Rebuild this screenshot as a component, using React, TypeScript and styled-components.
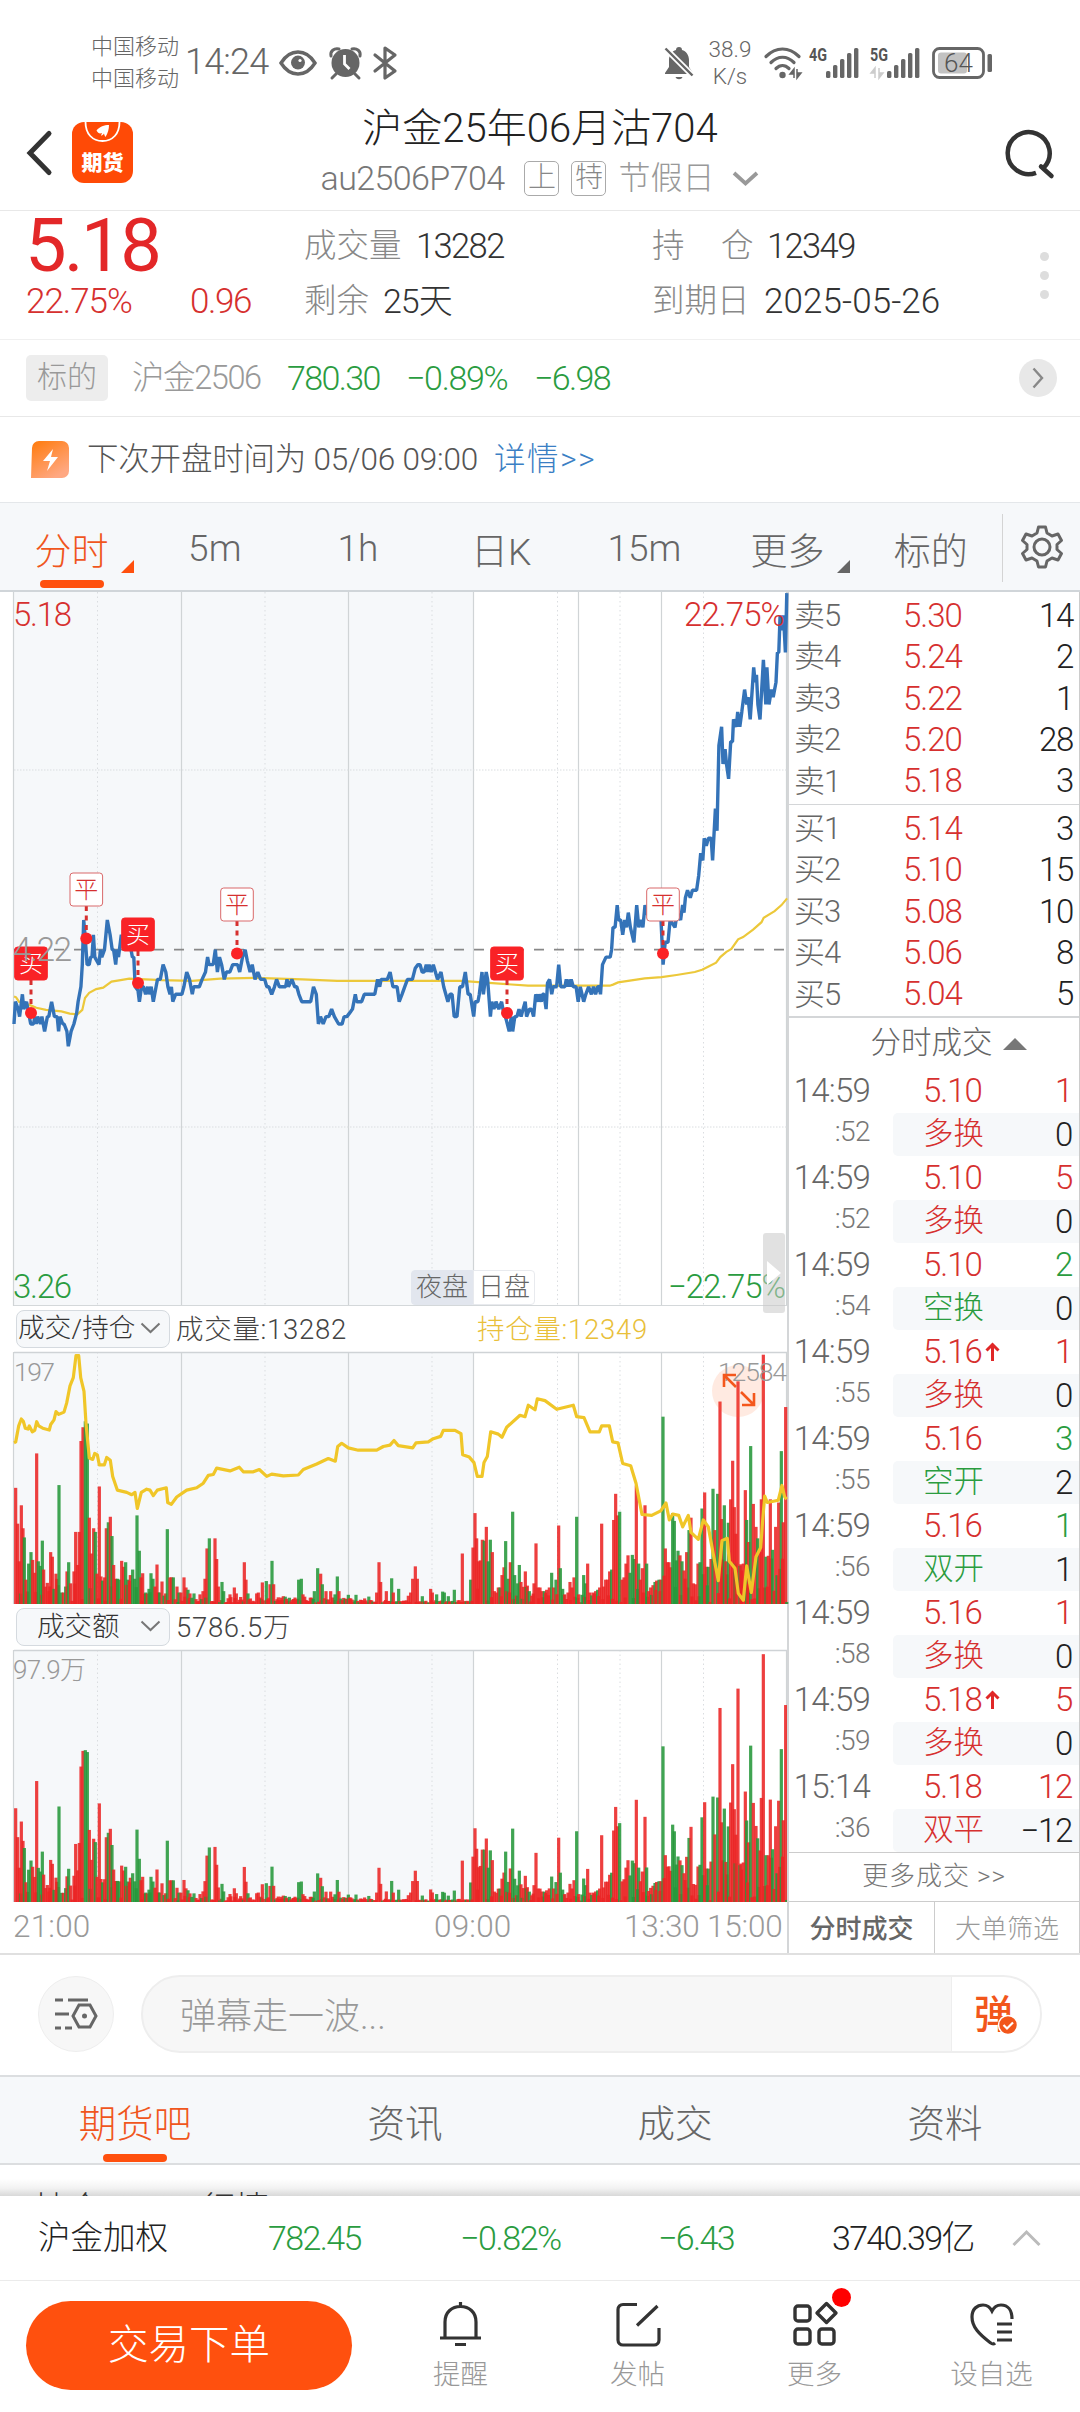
import React from 'react';
import styled, { createGlobalStyle, css } from 'styled-components';

const RED = '#d6302f';
const GREEN = '#2a9c3f';
const ORANGE = '#ff500e';
const PANEL = '#f6f8fa';
const FONT = "Roboto, 'Noto Sans CJK SC', sans-serif";

const Global = createGlobalStyle`
  html, body { margin: 0; padding: 0; background: #fff; }
  body { font-family: ${FONT}; font-weight: 300; color: #333; }
  * { box-sizing: border-box; }
  svg { display: block; flex: none; overflow: visible; }
`;

const Page = styled.div`
  width: 1080px;
  height: 2412px;
  display: flex;
  flex-direction: column;
  overflow: hidden;
  background: #fff;
`;

type TextProps = { $size?: number; $color?: string; $track?: number; $left?: number; $width?: number; $weight?: number };
const Text = styled.span<TextProps>`
  flex: none;
  white-space: pre;
  line-height: 1.2;
  font-size: ${(p) => p.$size ?? 32}px;
  color: ${(p) => p.$color ?? '#333'};
  letter-spacing: ${(p) => p.$track ?? 0}px;
  margin-left: ${(p) => p.$left ?? 0}px;
  font-weight: ${(p) => p.$weight ?? 300};
  ${(p) => p.$width && css`width: ${p.$width}px;`}
`;

/* ---------- status bar ---------- */
const StatusBar = styled.div`
  height: 105px;
  flex: none;
  display: flex;
  align-items: center;
  padding: 21px 87px 0 91px;
  color: #666;
`;
const Stack = styled.div<{ $gap: number; $left?: number; $width: number }>`
  display: flex;
  flex-direction: column;
  align-items: center;
  gap: ${(p) => p.$gap}px;
  width: ${(p) => p.$width}px;
  margin-left: ${(p) => p.$left ?? 0}px;
`;
const Spacer = styled.div`
  flex: 1;
`;
const Gap = styled.div<{ $w: number }>`
  width: ${(p) => p.$w}px;
  flex: none;
`;

const Signal = ({ label, data }: { label: string; data?: boolean }) => (
  <svg width="50" height="32" viewBox="0 0 50 32">
    <text x="0" y="14" fontSize="18.5" fontWeight="700" fill="#555" fontFamily="Roboto, sans-serif" textLength="18" lengthAdjust="spacingAndGlyphs">{label}</text>
    {data && <path d="M5 31V21l-4 5h4M9 21v10l4-5H9" fill="#ccc" stroke="#ccc" strokeWidth="1.5" />}
    {[7, 13, 19, 25, 30].map((h, i) => (
      <rect key={i} x={17 + i * 7} y={31 - h} width="4.4" height={h} rx="1.6" fill="#666" />
    ))}
  </svg>
);

/* ---------- title bar ---------- */
const TitleBar = styled.div`
  height: 106px;
  flex: none;
  display: flex;
  align-items: flex-start;
  padding: 0 26px;
  border-bottom: 1px solid #e8e8e8;
`;
const BackSlot = styled.div`
  padding-top: 26px;
`;
const AppSlot = styled.div`
  padding: 17px 0 0 20px;
`;
const TitleBlock = styled.div`
  flex: 1;
  display: flex;
  flex-direction: column;
  align-items: center;
  padding-right: 58px;
`;
const SubTitle = styled.div`
  display: flex;
  align-items: center;
  height: 42px;
  margin-top: 4px;
`;
const Tag = styled.span<{ $left: number }>`
  width: 35px;
  height: 35px;
  margin-left: ${(p) => p.$left}px;
  border: 1.5px solid #aaa;
  border-radius: 5px;
  font-size: 28px;
  line-height: 31px;
  text-align: center;
  color: #888;
`;
const SearchSlot = styled.div`
  padding-top: 25px;
`;

/* ---------- quote ---------- */
const Quote = styled.div`
  height: 129px;
  flex: none;
  display: grid;
  grid-template-columns: 279px 348px 382px 1fr;
  padding-left: 25px;
  border-bottom: 1px solid #f0f0f0;
`;
const QuoteColumn = styled.div`
  display: flex;
  flex-direction: column;
  padding-top: 8px;
`;
const QuoteRow = styled.div`
  display: flex;
  align-items: center;
  height: 55px;
`;
const PriceColumn = styled.div`
  display: flex;
  flex-direction: column;
`;
const PriceRow = styled.div<{ $h: number; $pad?: number }>`
  height: ${(p) => p.$h}px;
  display: flex;
  align-items: center;
  padding-left: ${(p) => p.$pad ?? 0}px;
`;
const Dots = styled.div`
  display: flex;
  flex-direction: column;
  gap: 10px;
  padding: 41px 0 0 6px;
`;
const Dot = styled.i`
  width: 9px;
  height: 9px;
  border-radius: 50%;
  background: #ddd;
`;

/* ---------- underlying and notice ---------- */
const InfoRow = styled.div<{ $h: number; $pad: number; $border: string }>`
  height: ${(p) => p.$h}px;
  flex: none;
  display: flex;
  align-items: center;
  padding: 0 23px 0 ${(p) => p.$pad}px;
  border-bottom: 1px solid ${(p) => p.$border};
`;
const GreyTag = styled.span`
  width: 82px;
  height: 46px;
  border-radius: 5px;
  background: #ededed;
  color: #999;
  font-size: 30px;
  line-height: 44px;
  text-align: center;
`;
const RoundButton = styled.span`
  width: 38px;
  height: 38px;
  border-radius: 50%;
  background: #e8e8e8;
  display: flex;
  align-items: center;
  justify-content: center;
`;

/* ---------- period tabs ---------- */
const PeriodBar = styled.div`
  height: 89px;
  flex: none;
  display: flex;
  background: ${PANEL};
  border-bottom: 2px solid #d0d5d9;
`;
const Period = styled.div<{ $active?: boolean; $corner?: boolean }>`
  width: 143.2px;
  position: relative;
  display: flex;
  align-items: center;
  justify-content: center;
  padding-top: 4px;
  font-size: 37px;
  color: ${(p) => (p.$active ? '#f0561d' : '#666')};
  ${(p) => p.$active && css`
    &::before {
      content: '';
      position: absolute;
      left: 40px;
      bottom: 2px;
      width: 64px;
      height: 8px;
      border-radius: 4px;
      background: ${ORANGE};
    }
  `}
  ${(p) => p.$corner && css`
    &::after {
      content: '';
      position: absolute;
      right: 9px;
      bottom: 17px;
      border-left: 13px solid transparent;
      border-bottom: 13px solid ${p.$active ? ORANGE : '#666'};
    }
  `}
`;
const GearSlot = styled.div`
  flex: 1;
  margin: 11px 0 8px;
  border-left: 1px solid #d4d4d4;
  display: flex;
  align-items: center;
  justify-content: center;
  padding-bottom: 3px;
`;

/* ---------- main panel ---------- */
const Main = styled.div`
  height: 1363px;
  flex: none;
  display: flex;
  border-bottom: 2px solid #e0e0e0;
`;
const Charts = styled.div`
  width: 787px;
  display: flex;
  flex-direction: column;
`;
const ChartBox = styled.div`
  position: relative;
`;
const Legend = styled.div<{ $h: number }>`
  height: ${(p) => p.$h}px;
  display: flex;
  align-items: center;
  padding-left: 16px;
`;
const Select = styled.div<{ $indent: number }>`
  width: 154px;
  height: 38px;
  display: flex;
  align-items: center;
  justify-content: space-between;
  padding: 0 8px 2px ${(p) => p.$indent}px;
  border: 1px solid #d5dadf;
  border-radius: 8px;
  background: ${PANEL};
  flex: none;
`;
const SessionSwitch = styled.div`
  position: absolute;
  left: 411px;
  bottom: 1px;
  display: flex;
`;
const Session = styled.span<{ $night?: boolean }>`
  width: 62px;
  height: 35px;
  font-size: 26px;
  line-height: 33px;
  text-align: center;
  color: #666;
  border: 1px solid ${(p) => (p.$night ? '#e2e6ee' : '#e8eaee')};
  border-radius: ${(p) => (p.$night ? '4px 0 0 4px' : '0 4px 4px 0')};
  background: ${(p) => (p.$night ? '#e2e6ee' : '#fff')};
`;
const Handle = styled.div`
  position: absolute;
  left: 763px;
  bottom: -7px;
  width: 22px;
  height: 80px;
  border-radius: 3px;
  background: rgba(200, 200, 200, 0.55);
  display: flex;
  align-items: center;
  justify-content: center;
`;
const Expand = styled.div`
  position: absolute;
  left: 711px;
  top: 12px;
`;
const TimeAxis = styled.div`
  height: 50px;
  display: grid;
  grid-template-columns: 421px 190px 83px 1fr;
  align-items: center;
  padding-left: 13px;
`;

/* ---------- order book ---------- */
const Book = styled.div`
  width: 293px;
  border-left: 2px solid #d4d6d8;
  border-right: 1px solid #ccc;
  display: flex;
  flex-direction: column;
`;
const Levels = styled.div<{ $h: number; $border: number; $top: number }>`
  height: ${(p) => p.$h}px;
  padding-top: ${(p) => p.$top}px;
  border-bottom: ${(p) => p.$border}px solid #d4d6d8;
`;
const Level = styled.div`
  height: 41.4px;
  display: grid;
  grid-template-columns: 109px 1fr auto;
  align-items: center;
  padding: 0 6px 0 5px;
`;
const TradeTitle = styled.div`
  height: 51px;
  display: flex;
  align-items: center;
  justify-content: center;
  gap: 10px;
  padding-left: 29px;
`;
const Up = styled.i`
  border: 12px solid transparent;
  border-top: 0;
  border-bottom: 12px solid #777;
`;
const Trade = styled.div`
  height: 87px;
  display: grid;
  grid-template-rows: 44px 43px;
  grid-template-columns: 104px 1fr;
`;
const TimeCell = styled.div<{ $lift?: number }>`
  display: flex;
  align-items: center;
  justify-content: flex-end;
  padding-right: 23px;
  padding-bottom: ${(p) => p.$lift ?? 0}px;
`;
const DealCell = styled.div<{ $shade?: boolean }>`
  display: flex;
  align-items: center;
  padding: 0 7px 0 30px;
  border-radius: 5px 0 0 5px;
  background: ${(p) => (p.$shade ? PANEL : 'transparent')};
`;
const MoreRow = styled.div`
  height: 50px;
  border-top: 1px solid #ccc;
  border-bottom: 1px solid #ccc;
  display: flex;
  align-items: center;
  justify-content: center;
  padding-right: 14px;
`;
const BookTabs = styled.div`
  flex: 1;
  display: grid;
  grid-template-columns: 1fr 1fr;
`;
const BookTab = styled.div<{ $active?: boolean }>`
  display: flex;
  align-items: center;
  justify-content: center;
  padding-bottom: 2px;
  font-size: 26px;
  font-weight: ${(p) => (p.$active ? 500 : 300)};
  color: ${(p) => (p.$active ? '#666' : '#999')};
  border-left: ${(p) => (p.$active ? 0 : 1)}px solid #ccc;
`;

/* ---------- comment bar ---------- */
const CommentBar = styled.div`
  height: 122px;
  flex: none;
  display: flex;
  align-items: center;
  padding: 0 38px 2px;
  border-bottom: 2px solid #dcdee0;
`;
const RoundTool = styled.div`
  width: 76px;
  height: 76px;
  border-radius: 50%;
  background: #f7f7f7;
  border: 1px solid #eee;
  display: flex;
  align-items: center;
  justify-content: center;
`;
const InputBox = styled.div`
  width: 901px;
  height: 78px;
  margin-left: 27px;
  display: flex;
  align-items: center;
  overflow: hidden;
  border-radius: 39px;
  background: #f7f7f7;
  border: 2px solid #eee;
`;
const Placeholder = styled.span`
  padding: 5px 0 0 37px;
  font-size: 36px;
  line-height: 44px;
  color: #999;
`;
const BulletToggle = styled.div`
  width: 89px;
  height: 100%;
  margin-left: auto;
  border-left: 1px solid #eee;
  background: #fff;
  display: flex;
  align-items: center;
  padding-left: 21px;
`;

/* ---------- bottom section ---------- */
const TopicTabs = styled.div`
  height: 88px;
  flex: none;
  display: grid;
  grid-template-columns: repeat(4, 1fr);
  background: ${PANEL};
  border-bottom: 2px solid #dcdee0;
`;
const Topic = styled.div<{ $active?: boolean }>`
  position: relative;
  display: flex;
  align-items: center;
  justify-content: center;
  padding-top: 1px;
  font-size: 37.5px;
  color: ${(p) => (p.$active ? '#f0561d' : '#666')};
  ${(p) => p.$active && css`
    &::after {
      content: '';
      position: absolute;
      left: 103px;
      bottom: 1px;
      width: 64px;
      height: 8px;
      border-radius: 4px;
      background: ${ORANGE};
    }
  `}
`;
const Feed = styled.div`
  height: 31px;
  flex: none;
  overflow: hidden;
  padding: 24px 0 0 34px;
  font-size: 34px;
  line-height: 40px;
  white-space: pre;
  background: linear-gradient(#fff 45%, #f2f2f2 75%, #d8d8d8);
`;
const IndexBar = styled.div`
  height: 85px;
  flex: none;
  display: flex;
  align-items: center;
  padding-left: 38px;
  border-bottom: 1px solid #ebebeb;
`;
const Actions = styled.div`
  flex: 1;
  display: flex;
  align-items: flex-start;
  padding: 20px 0 0 26px;
`;
const OrderButton = styled.div`
  width: 326px;
  height: 89px;
  border-radius: 45px;
  background: ${ORANGE};
  color: #fff;
  font-size: 40.5px;
  line-height: 89px;
  text-align: center;
  margin-right: 20px;
`;
const Action = styled.div`
  width: 177px;
  display: flex;
  flex-direction: column;
  align-items: center;
  gap: 11px;
  font-size: 27.5px;
  line-height: 34px;
  color: #999;
`;
const IconWrap = styled.div`
  position: relative;
`;
const Badge = styled.i`
  position: absolute;
  right: -14px;
  top: -13px;
  width: 19px;
  height: 19px;
  border-radius: 50%;
  background: #f00;
`;

/* ---------- chart data ---------- */
// price samples: minute of the trading day, offset from the previous settlement in 0.02 ticks
const PRICE = `0,-10 1,-7 3,-8 4,-9 6,-6 7,-8 9,-7 10,-8 12,-10 14,-10 15,-9 16,-10 17,-9 19,-10 20,-9 22,-11 24,-9 25,-9 27,-7 28,-8 29,-9 31,-9 32,-11 33,-9 35,-10 36,-10 38,-11 39,-13 41,-11 43,-10 45,-8.5 46,-7 48,-5 49,-2 50,4 51,2 52.5,-2 54,-2 55,-1 56,-1 57,2 58,-1 61,-2 62,0 63,-1 65,0 67,4 69,2 70.5,0 71.5,0 73,-2 74,0 75,-1 77,2 78,1 80,2 83,1 84,0 85,-1 86,-1 87,-5 89,-5.5 90,-7 91.5,-5 93,-5 94.5,-6 96,-5 97,-6 98.5,-5 100,-7 102,-5 103,-4 105,-4 107,-2 109,-3 110.5,-5 112,-6 113,-5 114,-7 116,-6 120.5,-6 122,-5 124,-3 126,-4 128,-6 129,-5 133,-5 135,-4 137.5,-3 139,-1 140,-2 143,-2 144.5,0 146,-3 147.5,-1 149,-2 151,-4 152.5,-3 155,-3 157,-2 160.5,-2 162,-3 164,-1 166,0 167.5,-1.5 169.5,-3 171,-2 173,-4 175,-3 177,-4 180,-4 181.5,-5 183,-5 185,-6 187,-5 188.5,-4 190.5,-5 195,-5 196,-4 197,-5 199.5,-4 201.5,-5 203,-5 204.5,-6 206.5,-7 213,-7 215,-5 217,-6 218.5,-10 220,-9 222,-10 224,-9 226,-9 228,-8 230,-9 233,-10 235.5,-10 237,-9 239,-9 241,-8.5 243,-8 245,-6 246,-7 249.5,-7 251.5,-6 259,-6 261,-4 262.5,-5 263.5,-4 268,-4 270,-3 272,-5 275,-5 276.5,-7 278.5,-6 280.5,-5 282.5,-4 286,-4 288,-2.5 290,-2 291.5,-2 293,-3 294.5,-3 296,-2 297,-3 298,-2 299.5,-3 301,-2 302.5,-3 304,-4 306.5,-3 308.5,-5 311.5,-7 313,-6 314.5,-6 316,-9 318,-9 320,-5 322,-5 324,-3 326,-6 327.5,-6 330,-9 331,-7 333,-7 334,-6 336,-3 337,-6 339,-3 340,-4 342,-9 343,-7 344.5,-8 346,-7 348,-8 350,-7 351,-8 353.5,-9.5 355.5,-11 357,-9 358,-11 359.5,-9 361,-9 362.5,-8 364,-9 365.5,-8 367,-7 368,-9 370,-8 371.5,-8 373,-9 374.5,-6 376,-7 377,-6 378.5,-7 379.5,-6 380.5,-6 382,-8 383,-4.5 384.5,-4 386,-6 387,-5 389.5,-5 391,-2 392.5,-5 395.5,-5 396.5,-4 397.5,-5 398.5,-4 399,-5 400,-4 401.5,-5 403.5,-5 405,-7 406.5,-5 409,-7 410.5,-6 412.5,-5 414.5,-6 416,-5 417.5,-6 419,-5 420,-5 421,-6 422.5,-2 425,-1 428,-1 429,0 430,3 431.5,3 433,6 434,4 435.5,4 437,2 438.5,4 439.7,3 441,5 442.5,3 445,1 447,6 448.5,3 450,4 451.5,3 453,6 454,5 458,4 461,6 464.5,4 466,-2 467.5,1 469.5,1 471,4 474.5,3 476,5 478.5,4 480,6 481,5 482,7 483.5,8 485.5,7 487,8 490,8 491.5,10 493,13 494.5,12 495.5,15 497,14 498.5,15 500.5,15 501.5,12 503.5,19 504.7,16 506,27.5 508,30 509,25 510.5,27 511.5,25 513,23 514.5,28 515.8,28 516.5,31 518.5,30 519.5,32 521,30 522.5,32 524.5,35 526,33 527,34 528.5,31 531,38 532,36 533,37 534,33 535.5,31 538,39 539.7,33 540.5,38 542,33 543.7,35 545,34 547,36 548,40 549,40 550,45 551,43 552.4,45 553.8,40 554.8,48`;
const AVERAGE = `0,-6.3 1.5,-6.4 3.6,-7 12,-7.5 16,-7.8 23,-8.1 34,-8.3 40,-8.6 45.6,-8.7 49,-8.1 51,-6.5 54,-5.8 59,-5.3 64,-5.1 70,-4.3 76.5,-4.1 82.7,-3.9 106,-4.1 128,-4.2 148,-3.9 173,-3.8 207,-4 232,-4.2 321,-4.2 336,-4.4 369,-4.85 427.7,-4.85 430,-4.7 433.7,-4.4 452.8,-3.85 464.8,-3.7 475.6,-3.4 488.7,-3 494,-2.7 498.3,-2.3 504,-1.75 507,-1 511.4,-.3 515,.1 519.8,1.4 523.4,1.7 530.6,2.7 536.6,3.7 538.2,4.3 546,5.2 551,6 555,6.9`;

// volume panel samples: position and depth below the panel head, then bar colour
const VOL_NIGHT = `47,540r 53,618r 58,700r 64,578r 69,628r 73,648g 78,740r 86,705g 93,680g 98,697r 104,725r 110,465r 115,700g 121,710g 127,655g 131,718r 142,747r 147,765r 152,680r 157,690r 162,760g 168,727r 177,534g 185,768g 190,768r 197,755g 201,722r 206,702g 212,748r 222,722r 227,636r 233,708r 238,636r 243,438r 249,408r 256,395g 262,400g 268,605r 274,683r 281,628r 286,636g 291,727r 298,537r 303,733r 308,742g 314,735r 319,628r 325,615g 331,603r 336,645g 341,708r 347,738r 353,738g 359,740g 365,699r 371,712r 377,702g 384,740g 391,730r 398,718g 404,738g 411,600g 418,677g 423,735r 428,726r 437,768g 447,760g 453,726g 459,738g 465,755r 471,707r 479,768g 486,744r 497,770r 502,630g 510,735r 515,735r 520,735g 531,755r 537,768g 543,768r 552,735r 558,757r 564,762g 570,770r 582,770g 600,772r 609,765r 615,738r 621,672r 628,650g 645,650r 650,695r 655,755r 666,745g 671,765g 690,772r 703,757r 709,770r 733,702r 738,740r 744,770g 770,770r 775,768r 787,746r 799,743g 810,750r 816,699g 821,750r 850,776r 896,740g 904,738g 909,772r 943,765g 953,715g 962,727r 967,750g 978,765r 992,765r 1005,772g 1012,733g 1017,765r 1045,773g 1068,773g 1130,768r 1137,702r 1142,745r 1159,765r 1175,737g 1180,768r 1196,760g`;
const VOL_DAY = `55,775r 62,768r 68,738r 76,711r 82,738r 97,776g 122,760r 127,768r 140,772g 158,766g 163,768g 175,776g 193,762g 217,683r 242,740g 249,670r 255,595r 260,650r 266,700r 271,698r 277,653r 283,655g 289,625r 295,700g 301,653g 307,680r 313,765r 319,768r 325,757r 330,757g 336,730r 342,713r 347,656g 355,738g 361,702r 368,592g 374,730g 383,748g 388,708g 393,745r 406,722r 412,753r 418,765g 432,748r 438,661r 444,757r 450,757r 456,765r 463,765g 470,762r 478,757r 485,725g 491,757r 498,740g 506,622r 511,715g 518,760g 524,772r 534,768r 540,745r 546,757r 552,735r 560,603g 566,772r 581,730g 587,748g 593,705r 600,768r 610,768r 617,765r 623,762g 629,757r 635,618r 641,755r 647,740r 653,740r 659,722r 665,718g 671,610r 677,553r 683,600r 689,592g 696,740r 702,735r 708,705r 714,687r 720,725g 727,686g 733,695g 739,535r 746,705g 751,740r 757,715r 765,578r 770,705g 776,765r 782,757r 789,752r 795,745g 800,742r 807,740g 813,740r 819,385g 826,672r 832,702r 837,702r 842,713r 848,595g 853,612g 859,698g 864,677g 870,687r 876,700g 882,720r 890,680r 897,632g 903,605r 910,748r 916,750r 924,705r 930,702g 936,585g 944,550r 949,712r 955,712g 963,695r 969,542g 975,632r 983,553g 990,352r 995,608r 1003,578g 1008,700r 1015,616g 1022,565r 1028,481r 1033,582r 1038,640r 1044,308r 1050,710g 1055,720r 1060,705r 1066,545r 1070,610g 1076,658r 1082,449g 1090,575r 1098,625r 1103,650g 1110,680r 1114,565r 1120,250r 1128,690g 1135,688r 1141,565r 1148,675g 1157,625r 1166,572r 1174,460g 1180,615r 1187,364r`;
const OI_NIGHT = `42,442 47,440 56,405 64,390 70,395 76,410 84,412 88,405 97,418 104,415 110,396 116,405 128,410 148,414 152,402 162,392 168,374 176,380 192,375 200,355 210,318 220,300 228,252 236,252 242,300 252,330 258,400 268,475 278,478 284,465 292,468 298,490 313,490 320,474 331,480 338,515 352,545 380,550 395,555 405,550 412,585 424,550 440,543 450,545 460,557 472,545 499,540 503,572 514,576 530,560 560,545 590,540 610,530 625,513 640,511 650,497 690,503 718,495 730,505 760,505 778,500 800,515 815,510 850,514 895,512 910,500 950,488 985,476 1006,482 1013,450 1025,443 1045,453 1075,458 1130,458 1150,450`;
const OI_DAY = `0,447 12,437 25,448 68,453 78,442 115,440 130,433 152,428 160,415 195,415 213,422 218,468 238,473 252,485 262,515 276,515 282,485 292,472 302,418 325,423 336,430 350,408 390,382 405,385 415,360 435,370 442,346 465,350 500,369 550,360 560,385 582,387 600,418 628,418 635,405 658,405 668,440 684,442 698,487 722,492 738,530 756,598 785,600 812,590 828,573 838,610 848,597 866,600 878,625 895,600 903,637 925,652 940,610 955,625 970,685 985,742 996,655 1012,650 1018,700 1035,715 1045,770 1060,785 1070,710 1084,768 1098,690 1112,670 1118,610 1124,558 1132,572 1165,567 1176,535 1184,560 1190,565`;

const LEFT = 14;
const PER_MIN = 1.393;
const MID = 357.7;
const TICK = 7.43;
const VOL_H = 252;

const pairs = (s: string) => s.split(' ').map((p) => p.split(',').map(parseFloat));
const priceTicks = pairs(PRICE);
const tickPath = (s: string) => pairs(s).map(([m, t]) => `${(LEFT + m * PER_MIN).toFixed(1)},${(MID - t * TICK).toFixed(1)}`).join(' ');
const priceAt = (x: number) => {
  const m = (x - LEFT) / PER_MIN;
  const hit = priceTicks.find((p) => p[0] >= m) ?? priceTicks[priceTicks.length - 1];
  return 4.22 + hit[1] * 0.02;
};

type Bar = { x: number; h: number; red: boolean };
const parseBars = (s: string, origin: number): Bar[] =>
  s.split(' ').map((p) => {
    const [u, v] = p.split(',');
    return { x: origin + +u / 3, h: (793 - parseFloat(v)) / 2.178, red: p.endsWith('r') };
  });
const marked = [...parseBars(VOL_NIGHT, 0), ...parseBars(VOL_DAY, 390)];
// minutes without a marked trade still show a short bar
const quiet: Bar[] = Array.from({ length: 555 }, (_, m) => {
  const x = LEFT + 1 + m * PER_MIN;
  const n = Math.abs(Math.sin(m * 12.9898) * 43758.5453) % 1;
  const top = m < 90 ? 24 : m < 115 ? 12 : m < 255 ? 6 : m < 330 ? 2.5 : m < 372 ? 18 : m < 425 ? 10 : m < 465 ? 18 : m < 500 ? 30 : 44;
  return { x, h: 1.5 + n * top, red: (m * 7) % 10 < 8 };
}).filter((b) => !marked.some((k) => Math.abs(k.x - b.x) < 0.75));
const bars = [...quiet, ...marked].sort((a, b) => a.x - b.x);
const oiLine = [...pairs(OI_NIGHT).map(([u, v]) => [u / 3, v]), ...pairs(OI_DAY).map(([u, v]) => [390 + u / 3, v])]
  .map(([x, v]) => `${x.toFixed(1)},${(VOL_H - (793 - v) / 2.178).toFixed(1)}`)
  .join(' ');

const Grid = ({ h }: { h: number }) => (
  <>
    <rect x={LEFT} y="0" width="459.6" height={h} fill={PANEL} />
    {[97.5, 265, 432, 557.5, 620, 703.5].map((x) => (
      <line key={x} x1={x} x2={x} y1="0" y2={h} stroke="#dadde0" strokeDasharray="1.5 3" />
    ))}
    {[13.5, 181.5, 348.5, 473.5, 578.5, 661.5, 786.5].map((x) => (
      <line key={x} x1={x} x2={x} y1="0" y2={h} stroke="#d0d4d6" strokeWidth="1.2" />
    ))}
  </>
);

const Marker = ({ x, y, dot, buy }: { x: number; y: number; dot: number; buy?: boolean }) => (
  <g>
    <line x1={x} x2={x} y1={y + 33} y2={dot} stroke={RED} strokeWidth="3" strokeDasharray="5 4.5" />
    <circle cx={x} cy={dot} r="6" fill="#fb2226" />
    <rect x={x - 16.3} y={y} width="32.6" height="33" rx="3" fill={buy ? '#f92226' : '#fff'} stroke={buy ? '#f92226' : '#d9696a'} />
    <text x={x} y={y + 25} textAnchor="middle" fontSize="24" fill={buy ? '#fff' : RED}>{buy ? '买' : '平'}</text>
  </g>
);

const PriceChart = () => (
  <ChartBox>
    <svg width="787" height="714" viewBox="0 0 787 714" fontFamily={FONT}>
      <Grid h={714} />
      {[178, 535].map((y) => (
        <line key={y} x1={LEFT} x2="787" y1={y} y2={y} stroke="#dadde0" strokeDasharray="1.5 1.5" />
      ))}
      <line x1={LEFT} x2="787" y1={MID} y2={MID} stroke="#888" strokeWidth="1.8" strokeDasharray="10 10" />
      <polyline points={tickPath(AVERAGE)} fill="none" stroke="#ecc83a" strokeWidth="2.2" />
      <polyline points={tickPath(PRICE)} fill="none" stroke="#3473b8" strokeWidth="3.4" strokeLinejoin="bevel" />
      <Marker x={31} y={355} dot={421} buy />
      <Marker x={86.3} y={281} dot={346.5} />
      <Marker x={138} y={326} dot={391} buy />
      <Marker x={237} y={296} dot={361.5} />
      <Marker x={507} y={355} dot={421} buy />
      <Marker x={663} y={296} dot={361.5} />
      <g fontSize="33">
        <text x="13" y="34" fill={RED} textLength="59">5.18</text>
        <text x="684" y="34" fill={RED} textLength="101">22.75%</text>
        <text x="13" y="369" fill="#999" textLength="59">4.22</text>
        <text x="13" y="706" fill={GREEN} textLength="59">3.26</text>
        <text x="668" y="706" fill={GREEN} textLength="118">−22.75%</text>
      </g>
      <line x1={LEFT} x2="787" y1="713.5" y2="713.5" stroke="#d4d8da" />
    </svg>
    <SessionSwitch>
      <Session $night>夜盘</Session>
      <Session>日盘</Session>
    </SessionSwitch>
    <Handle>
      <svg width="16" height="24" viewBox="0 0 16 24"><path d="M1 0L15 12L1 24Z" fill="#fff" /></svg>
    </Handle>
  </ChartBox>
);

const BarPanel = ({ amount, children }: { amount?: boolean; children?: React.ReactNode }) => (
  <svg width="787" height={VOL_H} viewBox={`0 0 787 ${VOL_H}`} fontFamily={FONT}>
    <Grid h={VOL_H} />
    <line x1={LEFT} x2="787" y1="0.5" y2="0.5" stroke="#cfd3d6" strokeWidth="1.5" />
    {bars.map((b, i) => {
      const h = amount ? (b.h * Math.min(priceAt(b.x), 5.03)) / 5.03 : b.h;
      return <rect key={i} x={b.x - 1.6} y={VOL_H - h} width="3.2" height={h} fill={b.red ? '#ea2424' : '#26973a'} opacity=".88" />;
    })}
    {children}
  </svg>
);

const Caret = () => (
  <svg width="21" height="12" viewBox="0 0 21 12"><path d="M1.5 1.5L10.5 10L19.5 1.5" fill="none" stroke="#777" strokeWidth="2" /></svg>
);

/* ---------- order data ---------- */
const ASKS = [['卖5', '5.30', '14'], ['卖4', '5.24', '2'], ['卖3', '5.22', '1'], ['卖2', '5.20', '28'], ['卖1', '5.18', '3']];
const BIDS = [['买1', '5.14', '3'], ['买2', '5.10', '15'], ['买3', '5.08', '10'], ['买4', '5.06', '8'], ['买5', '5.04', '5']];
type Deal = { t: string; s: string; p: string; q: string; kind: string; oi: string; qGreen?: boolean; kGreen?: boolean; up?: boolean };
const DEALS: Deal[] = [
  { t: '14:59', s: ':52', p: '5.10', q: '1', kind: '多换', oi: '0' },
  { t: '14:59', s: ':52', p: '5.10', q: '5', kind: '多换', oi: '0' },
  { t: '14:59', s: ':54', p: '5.10', q: '2', kind: '空换', oi: '0', qGreen: true, kGreen: true },
  { t: '14:59', s: ':55', p: '5.16', q: '1', kind: '多换', oi: '0', up: true },
  { t: '14:59', s: ':55', p: '5.16', q: '3', kind: '空开', oi: '2', qGreen: true, kGreen: true },
  { t: '14:59', s: ':56', p: '5.16', q: '1', kind: '双开', oi: '1', qGreen: true, kGreen: true },
  { t: '14:59', s: ':58', p: '5.16', q: '1', kind: '多换', oi: '0' },
  { t: '14:59', s: ':59', p: '5.18', q: '5', kind: '多换', oi: '0', up: true },
  { t: '15:14', s: ':36', p: '5.18', q: '12', kind: '双平', oi: '−12' },
];

const LevelRow = ({ row }: { row: string[] }) => (
  <Level>
    <Text $size={31} $color="#666" $track={-1}>{row[0]}</Text>
    <Text $size={33} $color={RED} $track={-1}>{row[1]}</Text>
    <Text $size={33} $color="#222" $track={-1.3}>{row[2]}</Text>
  </Level>
);

export default function App() {
  return (
    <Page>
      <Global />
      <StatusBar>
        <Stack $gap={6} $width={88}>
          <Text $size={22} $color="#666">中国移动</Text>
          <Text $size={22} $color="#666">中国移动</Text>
        </Stack>
        <Text $size={36} $color="#666" $track={-0.8} $left={6} $width={94}>14:24</Text>
        <svg width="38" height="26" viewBox="0 0 38 26">
          <path d="M2 13C7 5 13 2 19 2s12 3 17 11c-5 8-11 11-17 11S7 21 2 13Z" fill="none" stroke="#666" strokeWidth="3.4" />
          <circle cx="19" cy="12.6" r="7" fill="#666" /><circle cx="21" cy="10.5" r="1.6" fill="#fff" />
        </svg>
        <Gap $w={12} />
        <svg width="33" height="32" viewBox="0 0 33 32">
          <circle cx="16.5" cy="16" r="14" fill="#666" />
          <path d="M2 9C1 4 5 1 10 2M31 9c1-5-3-8-8-7M7 27l-4 4M26 27l4 4" fill="none" stroke="#666" strokeWidth="3" strokeLinecap="round" />
          <path d="M15.5 8v9l5 5" fill="none" stroke="#fff" strokeWidth="2.8" />
        </svg>
        <Gap $w={11} />
        <svg width="25" height="34" viewBox="0 0 25 34">
          <path d="M2 9l20 16-10 7V2l10 7L2 25" fill="none" stroke="#666" strokeWidth="3.2" strokeLinejoin="round" strokeLinecap="round" />
        </svg>
        <Spacer />
        <svg width="30" height="34" viewBox="0 0 30 34">
          <path d="M15 1a3 3 0 0 1 3 3c4 1 7 5 7 10v7l4 6v1H1v-1l4-6v-7C5 9 8 5 12 4a3 3 0 0 1 3-3ZM11.500 31h7c-1 3-6 3-7 0Z" fill="#666" />
          <path d="M0 1l29 29" stroke="#fff" strokeWidth="6" /><path d="M1.500 2.500l27 27" stroke="#666" strokeWidth="2.400" />
        </svg>
        <Stack $gap={0} $width={48} $left={12}>
          <Text $size={22.5} $color="#666">38.9</Text>
          <Text $size={22.5} $color="#666">K/s</Text>
        </Stack>
        <Gap $w={10} />
        <svg width="39" height="32" viewBox="0 0 39 32">
          <g fill="none" stroke="#666" strokeWidth="3.2" strokeLinecap="round">
            <path d="M2 9.500C12-.5 25-.5 35 9.500M7 15.500c7-7 16-7 23 0M12 21.500c4-4 9-4 13 0" />
          </g>
          <circle cx="18.500" cy="28" r="3.200" fill="#666" />
          <path d="M30 31V22l-4 5h4M33 22v9l4-5h-4" fill="#666" stroke="#666" strokeWidth="1.500" />
        </svg>
        <Gap $w={6} />
        <Signal label="4G" />
        <Gap $w={11} />
        <Signal label="5G" data />
        <Gap $w={12} />
        <svg width="61" height="32" viewBox="0 0 61 32">
          <rect x="1.500" y="1.500" width="50" height="29" rx="6" fill="none" stroke="#666" strokeWidth="2.800" />
          <rect x="6" y="5.500" width="29" height="21" rx="3" fill="#c2c2c2" />
          <rect x="55.500" y="7" width="4.500" height="18" rx="1.500" fill="#666" />
          <text x="12" y="25" fontSize="26" fill="#555" fontFamily="Roboto" fontWeight="300">64</text>
        </svg>
      </StatusBar>

      <TitleBar>
        <BackSlot>
          <svg width="26" height="44" viewBox="0 0 26 44"><path d="M23 2.500L4 22L23 41.500" fill="none" stroke="#333" strokeWidth="5" strokeLinecap="round" /></svg>
        </BackSlot>
        <AppSlot>
          <svg width="61" height="61" viewBox="0 0 61 61" fontFamily={FONT}>
            <rect width="61" height="61" rx="12" fill="#ff4a06" />
            <path d="M13.500 0c0 12 7 19 17 19s17-7 17-19" fill="none" stroke="#fff" strokeWidth="1.800" />
            <path d="M24.500 8.500C28 4.500 32 3 37 3c0 4-1 8-3.500 12-1-1.500-1.300-2.500-1.500-3.500-1 1.500-1.800 2-3 2l1-2.500c-2 .8-4 .5-5.500-2.500Z" fill="#fff" />
            <text x="30.500" y="48" fontSize="21" fontWeight="900" fill="#fff" textAnchor="middle">期货</text>
          </svg>
        </AppSlot>
        <TitleBlock>
          <Text $size={40} $color="#222">沪金25年06月沽704</Text>
          <SubTitle>
            <Text $size={34} $color="#777" $track={-0.6}>au2506P704</Text>
            <Tag $left={20}>上</Tag>
            <Tag $left={12}>特</Tag>
            <Text $size={32} $color="#999" $left={12}>节假日</Text>
            <Gap $w={18} />
            <svg width="27" height="17" viewBox="0 0 27 17"><path d="M2 3L13.500 13.500L25 3" fill="none" stroke="#999" strokeWidth="3.800" /></svg>
          </SubTitle>
        </TitleBlock>
        <SearchSlot>
          <svg width="49" height="50" viewBox="0 0 49 50">
            <path d="M31 42.800A21 21 0 1 1 38.500 38" fill="none" stroke="#333" strokeWidth="4.500" />
            <path d="M36 36.500L46.500 46" stroke="#333" strokeWidth="4.500" strokeLinecap="round" />
          </svg>
        </SearchSlot>
      </TitleBar>

      <Quote>
        <PriceColumn>
          <PriceRow $h={71}><Text $size={74} $color="#e32728" $track={-2.5} $weight={400}>5.18</Text></PriceRow>
          <PriceRow $h={40} $pad={1}>
            <Text $size={35} $color={RED} $track={-1} $width={164}>22.75%</Text>
            <Text $size={35} $color={RED} $track={-1.4}>0.96</Text>
          </PriceRow>
        </PriceColumn>
        <QuoteColumn>
          <QuoteRow><Text $color="#888" $width={112} $size={32.5}>成交量</Text><Text $size={34.5} $track={-1.6}>13282</Text></QuoteRow>
          <QuoteRow><Text $color="#888" $width={79} $size={32.5}>剩余</Text><Text $size={34} $track={-1}>25天</Text></QuoteRow>
        </QuoteColumn>
        <QuoteColumn>
          <QuoteRow><Text $color="#888" $width={69} $size={32.5}>持</Text><Text $color="#888" $width={46} $size={32.5}>仓</Text><Text $size={34.5} $track={-1.6}>12349</Text></QuoteRow>
          <QuoteRow><Text $color="#888" $width={112} $size={32.5}>到期日</Text><Text $size={35} $track={0.1}>2025-05-26</Text></QuoteRow>
        </QuoteColumn>
        <Dots><Dot /><Dot /><Dot /></Dots>
      </Quote>

      <InfoRow $h={77} $pad={26} $border="#e8e8e8">
        <GreyTag>标的</GreyTag>
        <Text $size={32.5} $color="#999" $track={-1.4} $left={24} $width={155}>沪金2506</Text>
        <Text $size={34} $color={GREEN} $track={-1.6} $width={119}>780.30</Text>
        <Text $size={34} $color={GREEN} $track={-1.3} $width={128}>−0.89%</Text>
        <Text $size={34} $color={GREEN} $track={-1.6}>−6.98</Text>
        <Spacer />
        <RoundButton>
          <svg width="12" height="22" viewBox="0 0 12 22"><path d="M1.500 1.500L10 11L1.500 20.500" fill="none" stroke="#888" strokeWidth="2.400" /></svg>
        </RoundButton>
      </InfoRow>

      <InfoRow $h={86} $pad={31} $border="#e4e7ea">
        <svg width="38" height="37" viewBox="0 0 38 37">
          <defs><linearGradient id="flash" x1="0" y1="0" x2="0.600" y2="1"><stop offset="0" stopColor="#ff7a0a" /><stop offset="1" stopColor="#ffa882" /></linearGradient></defs>
          <path d="M8 0h23a7 7 0 0 1 7 7v23a7 7 0 0 1-7 7H0L1 7a7 7 0 0 1 7-7Z" fill="url(#flash)" />
          <path d="M22 8l-10 12h7l-3 10 11-14h-7Z" fill="#fff" />
        </svg>
        <Text $size={31.5} $color="#555" $track={-0.2} $left={18} $width={407}>下次开盘时间为 05/06 09:00</Text>
        <Text $size={31.5} $color="#3b7fc4" $track={1.6}>{'详情>>'}</Text>
      </InfoRow>

      <PeriodBar>
        <Period $active $corner>分时</Period>
        <Period>5m</Period>
        <Period>1h</Period>
        <Period>日K</Period>
        <Period>15m</Period>
        <Period $corner>更多</Period>
        <Period>标的</Period>
        <GearSlot>
          <svg width="42" height="44" viewBox="0 0 42 44" fill="none" stroke="#666" strokeWidth="3" strokeLinejoin="round">
            <path d="M17.500 2h7l1.500 6 5 3 6-2 3.500 6.500-4.500 4v5l4.500 4L37 35l-6-2-5 3-1.500 6h-7L16 36l-5-3-6 2-3.500-6.500 4.500-4v-5l-4.500-4L5 9l6 2 5-3Z" />
            <circle cx="21" cy="22" r="8" />
          </svg>
        </GearSlot>
      </PeriodBar>

      <Main>
        <Charts>
          <PriceChart />
          <Legend $h={46}>
            <Select $indent={1}><Text $size={26.5} $track={0.2}>成交/持仓</Text><Caret /></Select>
            <Text $size={27.5} $color="#444" $track={0.7} $left={6} $width={301}>成交量:13282</Text>
            <Text $size={27.5} $color="#e9c03a" $track={0.7}>持仓量:12349</Text>
          </Legend>
          <ChartBox>
            <BarPanel>
              <text x="14" y="29" fontSize="26.500" fill="#999" textLength="41">197</text>
              <circle cx="738" cy="39" r="26" fill="#ff6a2a" opacity=".14" />
              <polyline points={oiLine} fill="none" stroke="#f0c628" strokeWidth="3.200" strokeLinejoin="round" />
              <text x="718" y="29" fontSize="26.500" fill="#999" textLength="69">12584</text>
            </BarPanel>
            <Expand>
              <svg width="52" height="52" viewBox="0 0 52 52" fill="none" stroke="#f4571c" strokeWidth="2.600">
                <path d="M13 23V11h12M13 11l12 12M30 28l13 13M43 29v12H31" />
              </svg>
            </Expand>
          </ChartBox>
          <Legend $h={46}>
            <Select $indent={20}><Text $size={27.5}>成交额</Text><Caret /></Select>
            <Text $size={27.5} $color="#444" $track={0.7} $left={6}>5786.5万</Text>
          </Legend>
          <BarPanel amount>
            <text x="13" y="29" fontSize="26" fill="#999" textLength="73">97.9万</text>
          </BarPanel>
          <TimeAxis>
            <Text $size={31.5} $color="#999" $track={0.2}>21:00</Text>
            <Text $size={31.5} $color="#999" $track={0.2}>09:00</Text>
            <Text $size={31.5} $color="#999" $track={-0.2}>13:30</Text>
            <Text $size={31.5} $color="#999" $track={-0.2}>15:00</Text>
          </TimeAxis>
        </Charts>

        <Book>
          <Levels $h={213} $border={1} $top={3}>{ASKS.map((r) => <LevelRow key={r[0]} row={r} />)}</Levels>
          <Levels $h={213} $border={2} $top={3}>{BIDS.map((r) => <LevelRow key={r[0]} row={r} />)}</Levels>
          <TradeTitle><Text $size={30.5} $color="#666">分时成交</Text><Up /></TradeTitle>
          {DEALS.map((d, i) => (
            <Trade key={i}>
              <TimeCell><Text $size={33} $color="#666" $track={-0.8}>{d.t}</Text></TimeCell>
              <DealCell>
                <Text $size={33} $color={RED} $track={-1}>{d.p}</Text>
                {d.up && <Gap $w={3} />}
                {d.up && <svg width="15" height="20" viewBox="0 0 15 20"><path d="M7.500 19V3M1.500 8.500l6-6 6 6" fill="none" stroke="#e02727" strokeWidth="3" /></svg>}
                <Spacer />
                <Text $size={33} $color={d.qGreen ? GREEN : RED} $track={-1.3}>{d.q}</Text>
              </DealCell>
              <TimeCell $lift={6}><Text $size={28} $color="#777" $track={-0.6}>{d.s}</Text></TimeCell>
              <DealCell $shade>
                <Text $size={30.5} $color={d.kGreen ? GREEN : RED}>{d.kind}</Text>
                <Spacer />
                <Text $size={33} $color="#222" $track={-1.3}>{d.oi}</Text>
              </DealCell>
            </Trade>
          ))}
          <MoreRow><Text $size={26} $color="#777" $track={0.9} $left={14}>{'更多成交 >>'}</Text></MoreRow>
          <BookTabs><BookTab $active>分时成交</BookTab><BookTab>大单筛选</BookTab></BookTabs>
        </Book>
      </Main>

      <CommentBar>
        <RoundTool>
          <svg width="44" height="34" viewBox="0 0 44 34" fill="none" stroke="#666" strokeWidth="3">
            <path d="M1 3h8M14 3h20M1 17h14M1 31h6M11 31h7" />
            <path d="M25 8h11l6 11-6 11H25l-6-11Z" /><circle cx="30.500" cy="19" r="2.500" fill="#666" stroke="none" />
          </svg>
        </RoundTool>
        <InputBox>
          <Placeholder>弹幕走一波...</Placeholder>
          <BulletToggle>
            <svg width="48" height="46" viewBox="0 0 48 46" fontFamily={FONT}>
              <text x="1" y="37" fontSize="39" fontWeight="500" fill="#f2561b">弹</text>
              <circle cx="35" cy="34" r="9.500" fill="#f2561b" stroke="#fff" strokeWidth="1.500" /><path d="M30.500 34l3.500 3.500 6-6" fill="none" stroke="#fff" strokeWidth="2.200" />
            </svg>
          </BulletToggle>
        </InputBox>
      </CommentBar>

      <TopicTabs>
        <Topic $active>期货吧</Topic>
        <Topic>资讯</Topic>
        <Topic>成交</Topic>
        <Topic>资料</Topic>
      </TopicTabs>
      <Feed>{'持仓            行情'}</Feed>

      <IndexBar>
        <Text $color="#222" $size={32.5} $width={230}>沪金加权</Text>
        <Text $size={34} $color={GREEN} $track={-1.6} $width={192}>782.45</Text>
        <Text $size={34} $color={GREEN} $track={-1.4} $width={198}>−0.82%</Text>
        <Text $size={34} $color={GREEN} $track={-1.6} $width={174}>−6.43</Text>
        <Text $size={34} $color="#222" $track={-1.7} $width={180}>3740.39亿</Text>
        <svg width="29" height="18" viewBox="0 0 29 18"><path d="M1.500 16L14.500 3L27.500 16" fill="none" stroke="#bbb" strokeWidth="3" /></svg>
      </IndexBar>

      <Actions>
        <OrderButton>交易下单</OrderButton>
        <Action>
          <svg width="43" height="46" viewBox="0 0 43 46" fill="none" stroke="#333" strokeWidth="3.200">
            <path d="M21.500 1v4M6 37V21C6 11 13 5.500 21.500 5.500S37 11 37 21v16M1 37h41M16 43.500h11" />
          </svg>
          提醒
        </Action>
        <Action>
          <svg width="46" height="46" viewBox="0 0 46 46" fill="none" stroke="#333" strokeWidth="3.200">
            <path d="M22 3.500H8a5 5 0 0 0-5 5V39a5 5 0 0 0 5 5h31a5 5 0 0 0 5-5V27M42.500 5L22 24.500" />
          </svg>
          发帖
        </Action>
        <Action>
          <IconWrap>
            <svg width="44" height="46" viewBox="0 0 44 46" fill="none" stroke="#333" strokeWidth="3.400">
              <rect x="2" y="5" width="15" height="15" rx="3" /><rect x="2" y="28" width="15" height="15" rx="3" />
              <rect x="26" y="28" width="15" height="15" rx="3" /><path d="M33.500 2.500L43 12l-9.500 9.500L24 12Z" strokeLinejoin="round" />
            </svg>
            <Badge />
          </IconWrap>
          更多
        </Action>
        <Action>
          <svg width="46" height="46" viewBox="0 0 46 46" fill="none" stroke="#333" strokeWidth="3.200">
            <path d="M26 42c-2 2-3 1-5-.5C10 33 3 26 3 16 3 8 8 4 14 4c4 0 7 2 9 6 2-4 5-6 9-6 7 0 11 5 11 14M28 23h15M28 31h15M28 39h15" />
          </svg>
          设自选
        </Action>
      </Actions>
    </Page>
  );
}
